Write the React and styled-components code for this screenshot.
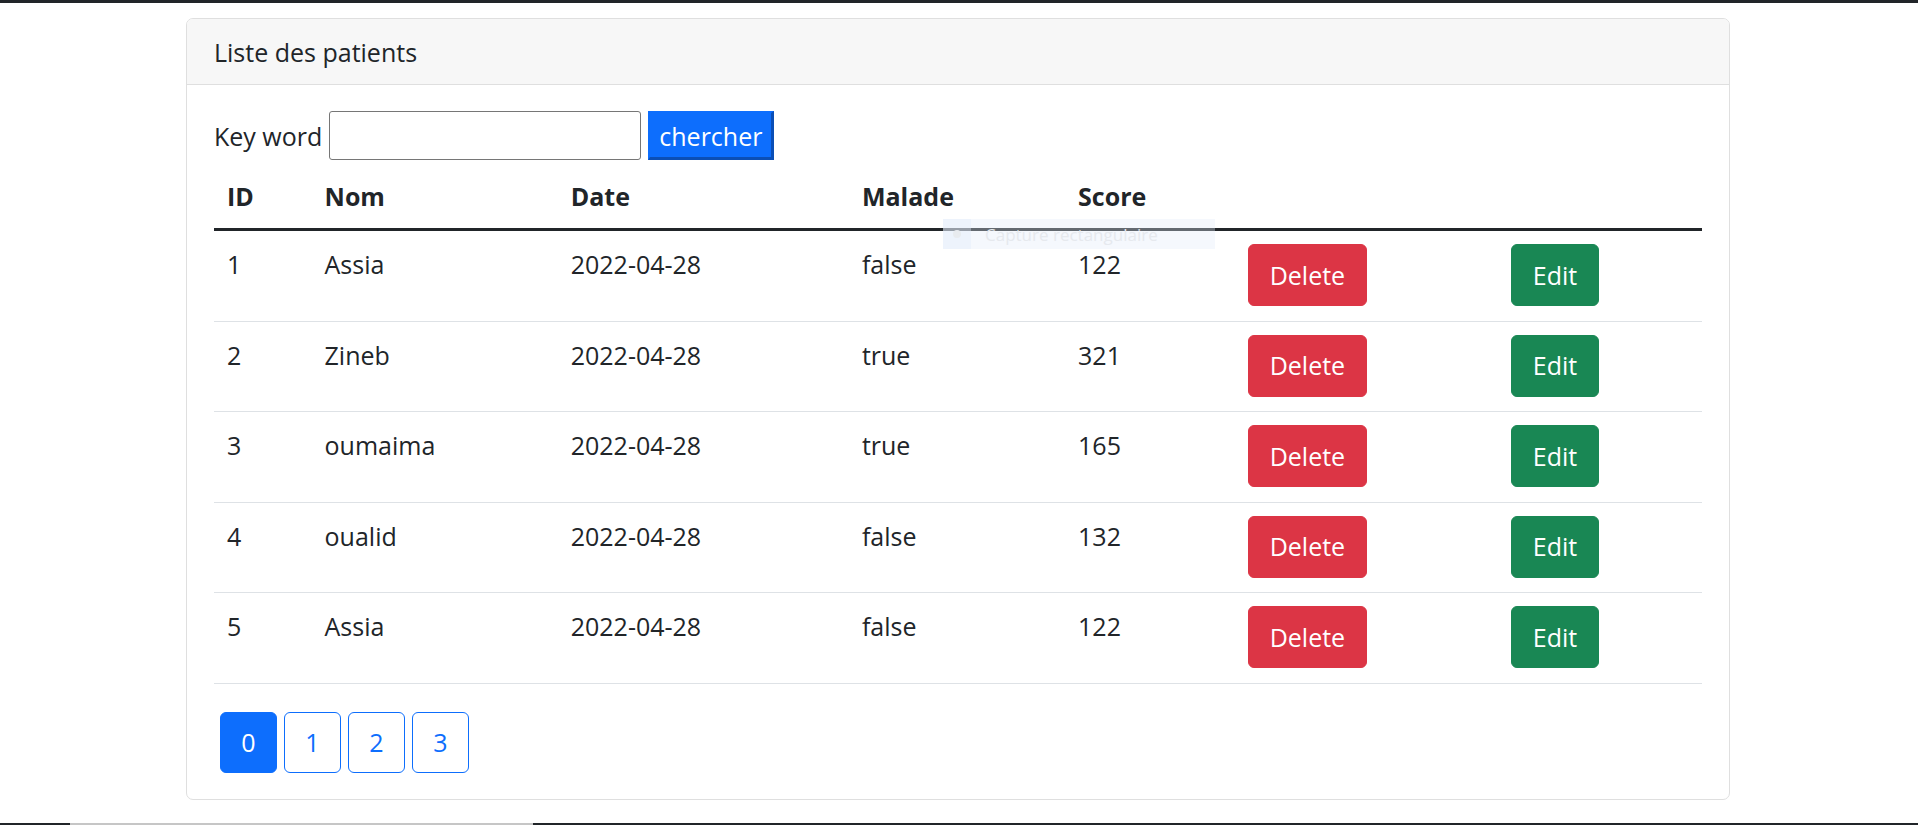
import React from 'react';
import styled, { createGlobalStyle } from 'styled-components';

const GlobalStyle = createGlobalStyle`
  html, body {
    margin: 0;
    padding: 0;
    background: #fff;
  }
  body {
    font-family: "Open Sans", "Noto Sans", sans-serif;
    color: #212529;
  }
`;

const Page = styled.div`
  height: 100vh;
  display: flex;
  flex-flow: column;
  overflow: hidden;
`;

const TopBar = styled.div`
  height: 3px;
  background: #212529;
  flex-shrink: 0;
`;

const Main = styled.div`
  flex: 1;
  padding: 15px 0 0 186px;
`;

const BottomStrip = styled.div`
  height: 2px;
  display: flex;
  flex-shrink: 0;
`;

const StripPart = styled.div`
  height: 100%;
  background: ${p => (p.$light ? '#c6c6c6' : '#212529')};
  width: ${p => p.$w || 'auto'};
  flex: ${p => (p.$w ? 'none' : 1)};
`;

const Card = styled.div`
  width: 1544px;
  box-sizing: border-box;
  border: 1px solid #dfdfdf;
  border-radius: 7px;
  overflow: hidden;
`;

const CardHeader = styled.div`
  background: #f7f7f7;
  border-bottom: 1px solid #dfdfdf;
  padding: 14px 27px 12px;
  font-size: 25px;
  line-height: 39px;
`;

const CardBody = styled.div`
  padding: 26px 27px 26px;
`;

const SearchForm = styled.form`
  display: flex;
  align-items: center;
  margin-bottom: 3px;
  font-size: 25px;
`;

const Label = styled.label`
  margin-right: 7px;
  line-height: 39px;
  padding-top: 2px;
`;

const SearchInput = styled.input`
  width: 312px;
  height: 49px;
  box-sizing: border-box;
  border: 1px solid #767676;
  border-radius: 3px;
  padding: 2px 6px;
  font: inherit;
  margin-right: 7px;
`;

const SearchButton = styled.button`
  height: 49px;
  box-sizing: border-box;
  padding: 2px 9px 0;
  background: #0d6efd;
  color: #fff;
  font: inherit;
  font-size: 25px;
  border-style: solid;
  border-width: 2px 3px 3px 2px;
  border-color: #0d6efd #0b4fb6 #0b4fb6 #0d6efd;
  border-radius: 0;
`;

const TableWrap = styled.div`
  position: relative;
`;

const Table = styled.table`
  width: 100%;
  table-layout: fixed;
  border-collapse: collapse;
  margin-bottom: 28px;
  font-size: 25px;
`;

const Th = styled.th`
  text-align: left;
  font-weight: 700;
  padding: 14px 13px 12px;
  line-height: 39px;
  border-bottom: 3px solid #212529;
  width: ${p => p.$w - 26}px;
`;

const Tr = styled.tr`
  border-bottom: 1px solid #dee2e6;
`;

const Td = styled.td`
  vertical-align: top;
  padding: 13px 13px 14.5px;
  line-height: 41px;
`;

const ActionButton = styled.button`
  display: block;
  height: 62px;
  box-sizing: border-box;
  padding: 0 20.5px;
  border: 1px solid ${p => p.$color};
  border-radius: 6px;
  background: ${p => p.$color};
  color: #fff;
  font: inherit;
  font-size: 25px;
`;

const Ghost = styled.div`
  position: absolute;
  left: 729px;
  top: 56px;
  width: 272px;
  height: 30px;
  display: flex;
  align-items: center;
  background: rgba(225, 236, 250, 0.35);
  pointer-events: none;
`;

const GhostIcon = styled.div`
  width: 28px;
  height: 100%;
  display: flex;
  align-items: center;
  justify-content: center;
  background: rgba(225, 236, 250, 0.4);
  &::after {
    content: '';
    width: 8px;
    height: 8px;
    border-radius: 50%;
    background: #e8ebef;
  }
`;

const GhostText = styled.span`
  margin-left: 14px;
  font-size: 17px;
  color: #e6e9ee;
`;

const Pagination = styled.div`
  display: flex;
  gap: 7px;
  margin-left: 6px;
`;

const PageButton = styled.button`
  min-width: 57px;
  height: 61px;
  box-sizing: border-box;
  border: 1px solid #0d6efd;
  border-radius: 6px;
  background: ${p => (p.$active ? '#0d6efd' : '#fff')};
  color: ${p => (p.$active ? '#fff' : '#0d6efd')};
  font: inherit;
  font-size: 25px;
  padding: 0;
`;

const patients = [
  { id: 1, nom: 'Assia', date: '2022-04-28', malade: 'false', score: 122 },
  { id: 2, nom: 'Zineb', date: '2022-04-28', malade: 'true', score: 321 },
  { id: 3, nom: 'oumaima', date: '2022-04-28', malade: 'true', score: 165 },
  { id: 4, nom: 'oualid', date: '2022-04-28', malade: 'false', score: 132 },
  { id: 5, nom: 'Assia', date: '2022-04-28', malade: 'false', score: 122 },
];

const columns = [
  { label: 'ID', w: 97.5 },
  { label: 'Nom', w: 246 },
  { label: 'Date', w: 291 },
  { label: 'Malade', w: 216 },
  { label: 'Score', w: 170 },
  { label: '', w: 263 },
  { label: '', w: 203.5 },
];

export default function App() {
  return (
    <>
      <GlobalStyle />
      <Page>
        <TopBar />
        <Main>
          <Card>
            <CardHeader>Liste des patients</CardHeader>
            <CardBody>
              <SearchForm onSubmit={e => e.preventDefault()}>
                <Label>Key word</Label>
                <SearchInput type="text" />
                <SearchButton type="submit">chercher</SearchButton>
              </SearchForm>
              <TableWrap>
                <Table>
                  <thead>
                    <tr>
                      {columns.map((c, i) => (
                        <Th key={i} $w={c.w}>{c.label}</Th>
                      ))}
                    </tr>
                  </thead>
                  <tbody>
                    {patients.map(p => (
                      <Tr key={p.id}>
                        <Td>{p.id}</Td>
                        <Td>{p.nom}</Td>
                        <Td>{p.date}</Td>
                        <Td>{p.malade}</Td>
                        <Td>{p.score}</Td>
                        <Td>
                          <ActionButton $color="#dc3545">Delete</ActionButton>
                        </Td>
                        <Td>
                          <ActionButton $color="#198754">Edit</ActionButton>
                        </Td>
                      </Tr>
                    ))}
                  </tbody>
                </Table>
                <Ghost>
                  <GhostIcon />
                  <GhostText>Capture rectangulaire</GhostText>
                </Ghost>
              </TableWrap>
              <Pagination>
                {[0, 1, 2, 3].map(n => (
                  <PageButton key={n} $active={n === 0}>{n}</PageButton>
                ))}
              </Pagination>
            </CardBody>
          </Card>
        </Main>
        <BottomStrip>
          <StripPart $w="70px" />
          <StripPart $w="463px" $light />
          <StripPart />
        </BottomStrip>
      </Page>
    </>
  );
}
